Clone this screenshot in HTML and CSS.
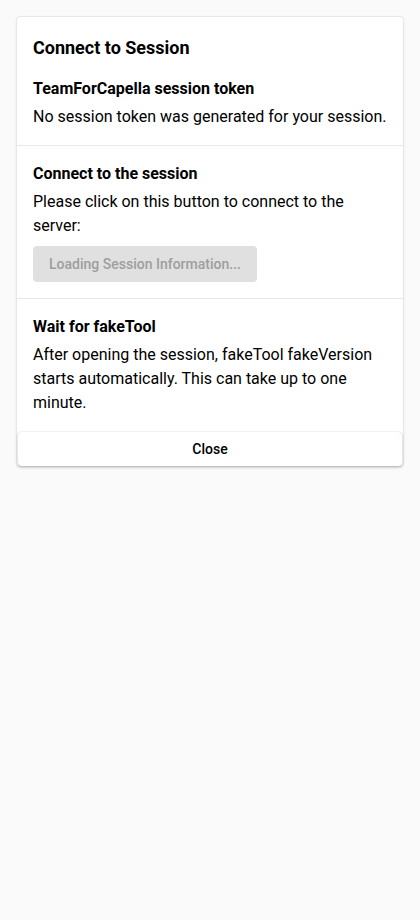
FILE: index.html
```html
<!DOCTYPE html>
<html>
<head>
<meta charset="utf-8">
<link rel="stylesheet" href="styles.css">
</head>
<body>
<div class="card">
  <section class="section first">
    <h1 class="title">Connect to Session</h1>
    <h2 class="heading">TeamForCapella session token</h2>
    <p class="text">No session token was generated for your session.</p>
  </section>
  <section class="section">
    <h2 class="heading">Connect to the session</h2>
    <p class="text">Please click on this button to connect to the server:</p>
    <button class="btn-disabled" disabled>Loading Session Information...</button>
  </section>
  <section class="section last">
    <h2 class="heading">Wait for fakeTool</h2>
    <p class="text">After opening the session, fakeTool fakeVersion starts automatically. This can take up to one minute.</p>
  </section>
  <button class="close-btn">Close</button>
</div>
</body>
</html>
```
FILE: styles.css
```css
html, body {
  margin: 0;
  padding: 0;
  background: #fafafa;
  font-family: Roboto, "Liberation Sans", sans-serif;
  color: #000;
}
body {
  padding: 16px;
}
.card {
  background: #fff;
  border: 1px solid #e5e7eb;
  border-radius: 4px;
  box-shadow: 0 1px 3px rgba(0,0,0,0.06);
  display: flex;
  flex-direction: column;
}
.section {
  padding: 16px 16px 16px;
  border-bottom: 1px solid #e5e7eb;
}
.section.first {
  padding-top: 17px;
}
.section.last {
  border-bottom: none;
  padding-bottom: 17px;
}
.title {
  margin: 0 0 15px;
  font-size: 18px;
  line-height: 28px;
  font-weight: 700;
}
.heading {
  margin: 0 0 4px;
  font-size: 16px;
  line-height: 24px;
  font-weight: 700;
}
.text {
  margin: 0;
  font-size: 16px;
  line-height: 24px;
}
.btn-disabled {
  margin-top: 8px;
  width: 224px;
  height: 36px;
  border: none;
  border-radius: 4px;
  background: #e0e0e0;
  color: #9e9e9e;
  font-family: Roboto, "Liberation Sans", sans-serif;
  font-size: 14px;
  font-weight: 500;
  padding: 0 16px;
}
.close-btn {
  margin: 0 1px 0;
  height: 34px;
  background: #fff;
  border: none;
  border-radius: 4px;
  box-shadow: 0 1px 3px rgba(0,0,0,0.25), 0 0 1px rgba(0,0,0,0.15);
  font-family: Roboto, "Liberation Sans", sans-serif;
  font-size: 14px;
  font-weight: 500;
  color: #000;
}
```
